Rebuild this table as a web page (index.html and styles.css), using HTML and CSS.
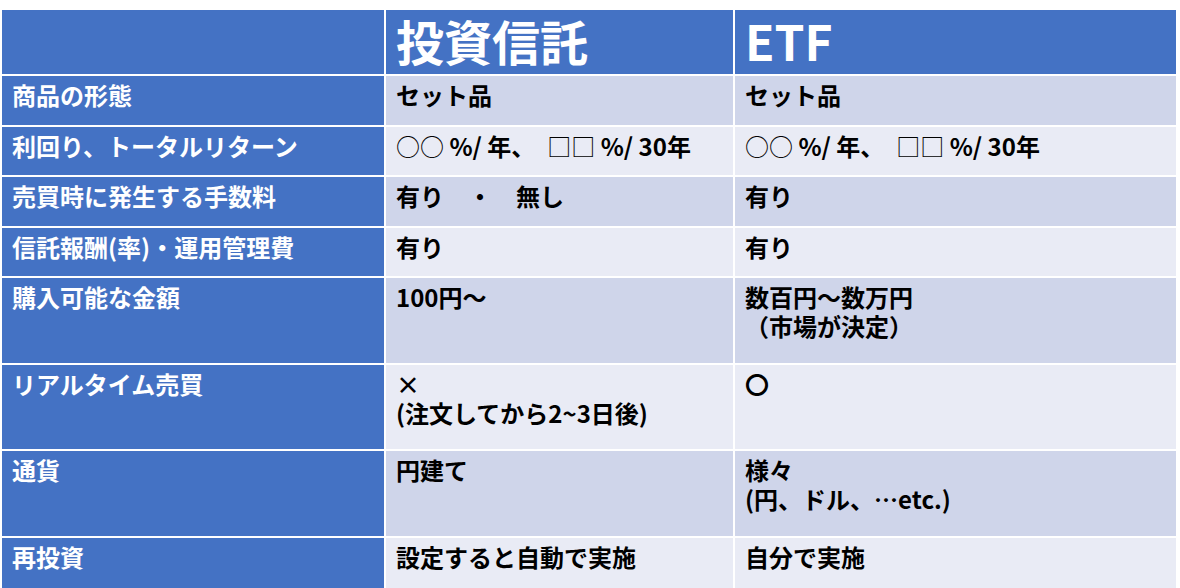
FILE: index.html
```html
<!DOCTYPE html>
<html lang="ja">
<head>
<meta charset="utf-8">
<title>投資信託とETFの比較</title>
<link rel="stylesheet" href="styles.css">
</head>
<body>
<div class="compare">
  <div class="cell head"></div>
  <div class="cell head title">投資信託</div>
  <div class="cell head title">ETF</div>

  <div class="cell label">商品の形態</div>
  <div class="cell dark">セット品</div>
  <div class="cell dark">セット品</div>

  <div class="cell label">利回り、トータルリターン</div>
  <div class="cell light"><span class="thin">○○</span> %/ 年、　<span class="thin">□□</span> %/ 30年</div>
  <div class="cell light"><span class="thin">○○</span> %/ 年、　<span class="thin">□□</span> %/ 30年</div>

  <div class="cell label">売買時に発生する手数料</div>
  <div class="cell dark">有り　・　無し</div>
  <div class="cell dark">有り</div>

  <div class="cell label">信託報酬(率)・運用管理費</div>
  <div class="cell light">有り</div>
  <div class="cell light">有り</div>

  <div class="cell label">購入可能な金額</div>
  <div class="cell dark">100円～</div>
  <div class="cell dark"><span class="line">数百円～数万円</span><span class="line">（市場が決定）</span></div>

  <div class="cell label">リアルタイム売買</div>
  <div class="cell light"><span class="line">×</span><span class="line">(注文してから2~3日後)</span></div>
  <div class="cell light">〇</div>

  <div class="cell label">通貨</div>
  <div class="cell dark">円建て</div>
  <div class="cell dark"><span class="line">様々</span><span class="line">(円、ドル、…etc.)</span></div>

  <div class="cell label">再投資</div>
  <div class="cell light">設定すると自動で実施</div>
  <div class="cell light">自分で実施</div>
</div>
</body>
</html>
```

FILE: styles.css
```css
html, body {
  margin: 0;
  padding: 0;
  background: #ffffff;
  overflow: hidden;
}

body {
  width: 1180px;
  height: 588px;
  font-family: "Noto Sans CJK JP", "Noto Sans", sans-serif;
}

.compare {
  margin: 10px 0 0 2px;
  width: 1174px;
  display: grid;
  grid-template-columns: 382px 347px 441px;
  grid-template-rows: 64px 48.5px 48.5px 48.5px 48.5px 84.5px 84.5px 84.5px 60px;
  gap: 2px;
  background: #ffffff;
}

.cell {
  padding: 4px 10px 0 10px;
  font-size: 24px;
  line-height: 29px;
  font-weight: 700;
  color: #000000;
  white-space: nowrap;
}

.line {
  display: block;
  height: 29px;
}

.head {
  background: #4472c4;
  color: #ffffff;
}

.title {
  display: flex;
  align-items: center;
  padding: 0 10px 4px 10px;
  font-size: 48px;
  line-height: 56px;
}

.label {
  background: #4472c4;
  color: #ffffff;
}

.dark {
  background: #cfd5ea;
}

.light {
  background: #e9ebf5;
}

.thin {
  font-weight: 400;
}
```
